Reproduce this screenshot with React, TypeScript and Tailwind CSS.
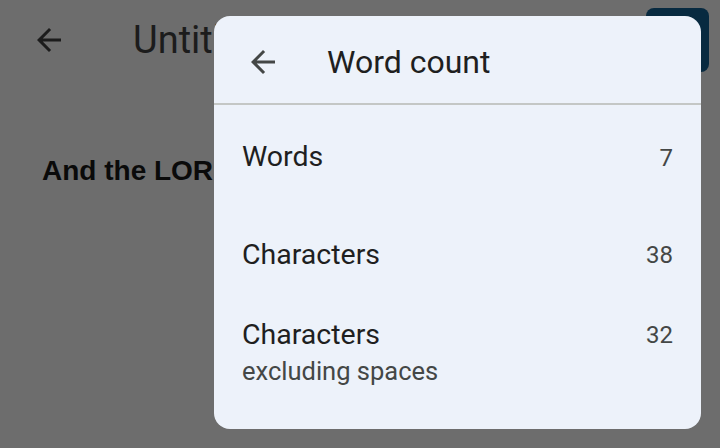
import React from 'react';

const BackArrow: React.FC<{ className?: string }> = ({ className }) => (
  <svg viewBox="0 0 24 24" className={className} fill="currentColor">
    <path d="M20 11H7.83l5.59-5.59L12 4l-8 8 8 8 1.41-1.41L7.83 13H20v-2z" />
  </svg>
);

const rows = [
  { label: 'Words', value: '7' },
  { label: 'Characters', value: '38' },
];

const App: React.FC = () => {
  return (
    <div
      className="relative w-[720px] h-[448px] overflow-hidden bg-[#6d6d6d]"
      style={{ fontFamily: 'Roboto, "Noto Sans", sans-serif' }}
    >
      {/* Document behind the dim */}
      <div className="flex items-start h-[80px] pt-[8px]">
        <div className="w-[133px] h-[64px] flex items-center pl-[31px]">
          <BackArrow className="w-[36px] h-[36px] text-[#1c1c1c]" />
        </div>
        <div className="flex-1 h-[64px] flex items-center text-[38px] text-[#1c1c1c] leading-none">
          Untitled document
        </div>
        <div className="w-[63px] h-[64px] mr-[11px] rounded-[8px] bg-[#082a40]" />
      </div>
      <p
        className="pl-[42px] pt-[77px] text-[28px] font-bold text-[#0a0a0a] leading-none"
        style={{ fontFamily: '"Liberation Sans", Arial, sans-serif' }}
      >
        And the LORD God said
      </p>

      {/* Word count dialog */}
      <div className="absolute left-[214px] top-[16px] w-[487px] h-[413px] rounded-[16px] bg-[#edf2fa] flex flex-col">
        <div className="h-[89px] pt-[5px] flex items-center border-b-2 border-[#c4c7c5] shrink-0">
          <div className="w-[113px] pl-[31px] flex items-center">
            <BackArrow className="w-[36px] h-[36px] text-[#444746]" />
          </div>
          <span className="text-[32px] text-[#1f1f1f]">Word count</span>
        </div>

        <div className="flex flex-col px-[28px] pt-[3px]">
          {rows.map((r, i) => (
            <div
              key={r.label}
              className={`flex items-center justify-between ${i === 0 ? 'h-[99px]' : 'h-[96px]'}`}
            >
              <span className="text-[28.5px] text-[#1f1f1f]">{r.label}</span>
              <span className="text-[24px] text-[#444746]">{r.value}</span>
            </div>
          ))}
          <div className="flex items-start justify-between pt-[13px]">
            <div className="flex flex-col">
              <span className="text-[28.5px] leading-[38px] text-[#1f1f1f]">Characters</span>
              <span className="text-[25.5px] leading-[30px] mt-[2px] text-[#444746]">excluding spaces</span>
            </div>
            <span className="text-[24px] leading-[38px] text-[#444746]">32</span>
          </div>
        </div>
      </div>
    </div>
  );
};

export default App;
